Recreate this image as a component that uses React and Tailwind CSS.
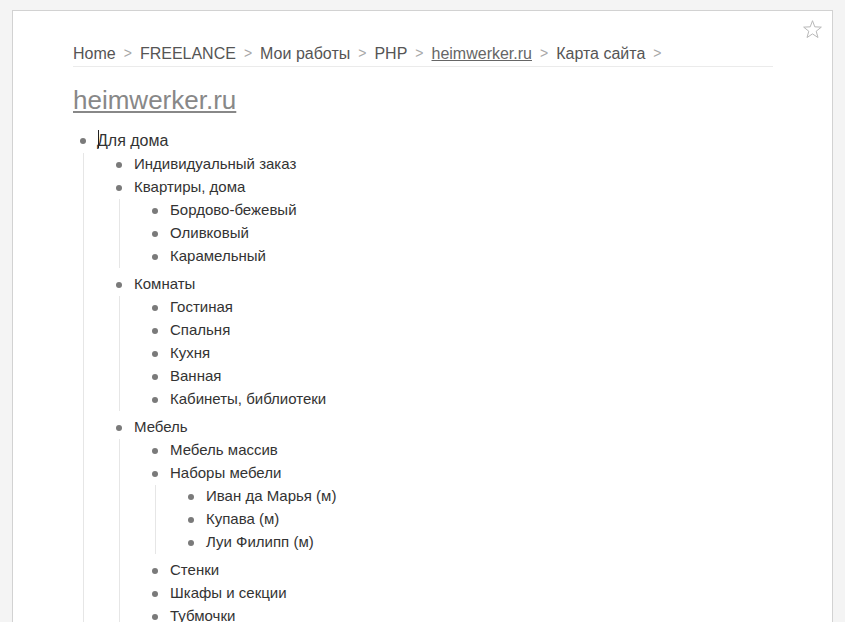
import React from 'react';

const crumbs = [
  { t: 'Home' },
  { t: 'FREELANCE' },
  { t: 'Мои работы' },
  { t: 'PHP' },
  { t: 'heimwerker.ru', link: true },
  { t: 'Карта сайта' },
];

const tree = [
  {
    t: 'Для дома',
    caret: true,
    c: [
      { t: 'Индивидуальный заказ' },
      { t: 'Квартиры, дома', c: [{ t: 'Бордово-бежевый' }, { t: 'Оливковый' }, { t: 'Карамельный' }] },
      {
        t: 'Комнаты',
        c: [{ t: 'Гостиная' }, { t: 'Спальня' }, { t: 'Кухня' }, { t: 'Ванная' }, { t: 'Кабинеты, библиотеки' }],
      },
      {
        t: 'Мебель',
        c: [
          { t: 'Мебель массив' },
          { t: 'Наборы мебели', c: [{ t: 'Иван да Марья (м)' }, { t: 'Купава (м)' }, { t: 'Луи Филипп (м)' }] },
          { t: 'Стенки' },
          { t: 'Шкафы и секции' },
          { t: 'Тубмочки' },
          { t: 'Кровати' },
          { t: 'Прихожие' },
        ],
      },
      { t: 'Двери' },
    ],
  },
];

const Node = ({ item, top }) => (
  <li>
    <div className={`flex items-center ${top ? 'h-[24px] text-[16px]' : 'h-[23px] text-[15px]'}`}>
      <span className="w-[6px] h-[6px] rounded-full bg-[#7a7a7a] shrink-0" />
      <span className={`relative whitespace-nowrap ${top ? 'ml-[11px]' : 'ml-[12px]'}`}>
        {item.caret && <span className="absolute left-[1px] top-[1px] w-px h-[18px] bg-[#222]" />}
        {item.t}
      </span>
    </div>
    {item.c && (
      <ul className="ml-[3px] border-l border-[#e6e6e6] pl-[32px] mb-[5px]">
        {item.c.map((ch) => (
          <Node key={ch.t} item={ch} />
        ))}
      </ul>
    )}
  </li>
);

const App = () => {
  return (
    <div className="min-h-screen bg-[#f4f4f4] pt-[10px] px-[12px] font-['Liberation_Sans',Arial,sans-serif]">
      <div className="relative bg-white border border-[#d2d2d2] pl-[60px] pr-[59px] pt-[32px] pb-10">
        {/* звезда */}
        <svg className="absolute top-[9px] right-[10px]" width="19" height="19" viewBox="0 0 18 19">
          <polygon
            points="9,0.7 11.29,6.84 17.84,7.13 12.71,11.21 14.47,17.52 9,13.9 3.53,17.52 5.29,11.21 0.16,7.13 6.71,6.84"
            fill="none"
            stroke="#b8b8b8"
            strokeWidth="1"
            strokeLinejoin="miter"
          />
        </svg>

        {/* хлебные крошки */}
        <div className="w-[700px] border-b border-[#ebebeb] pb-[2px] flex items-center h-[24px] text-[16px] text-[#555]">
          {crumbs.map((c) => (
            <React.Fragment key={c.t}>
              <span className={c.link ? 'underline text-[#666]' : ''}>{c.t}</span>
              <span className="px-[8px] text-[14px] text-[#a8a8a8]">&gt;</span>
            </React.Fragment>
          ))}
        </div>

        <h1 className="mt-[18px] text-[26px] leading-[30px] text-[#888] underline">heimwerker.ru</h1>

        <ul className="mt-[14px] ml-[7px] text-[#333]">
          {tree.map((item) => (
            <Node key={item.t} item={item} top />
          ))}
        </ul>
      </div>
    </div>
  );
};

export default App;
